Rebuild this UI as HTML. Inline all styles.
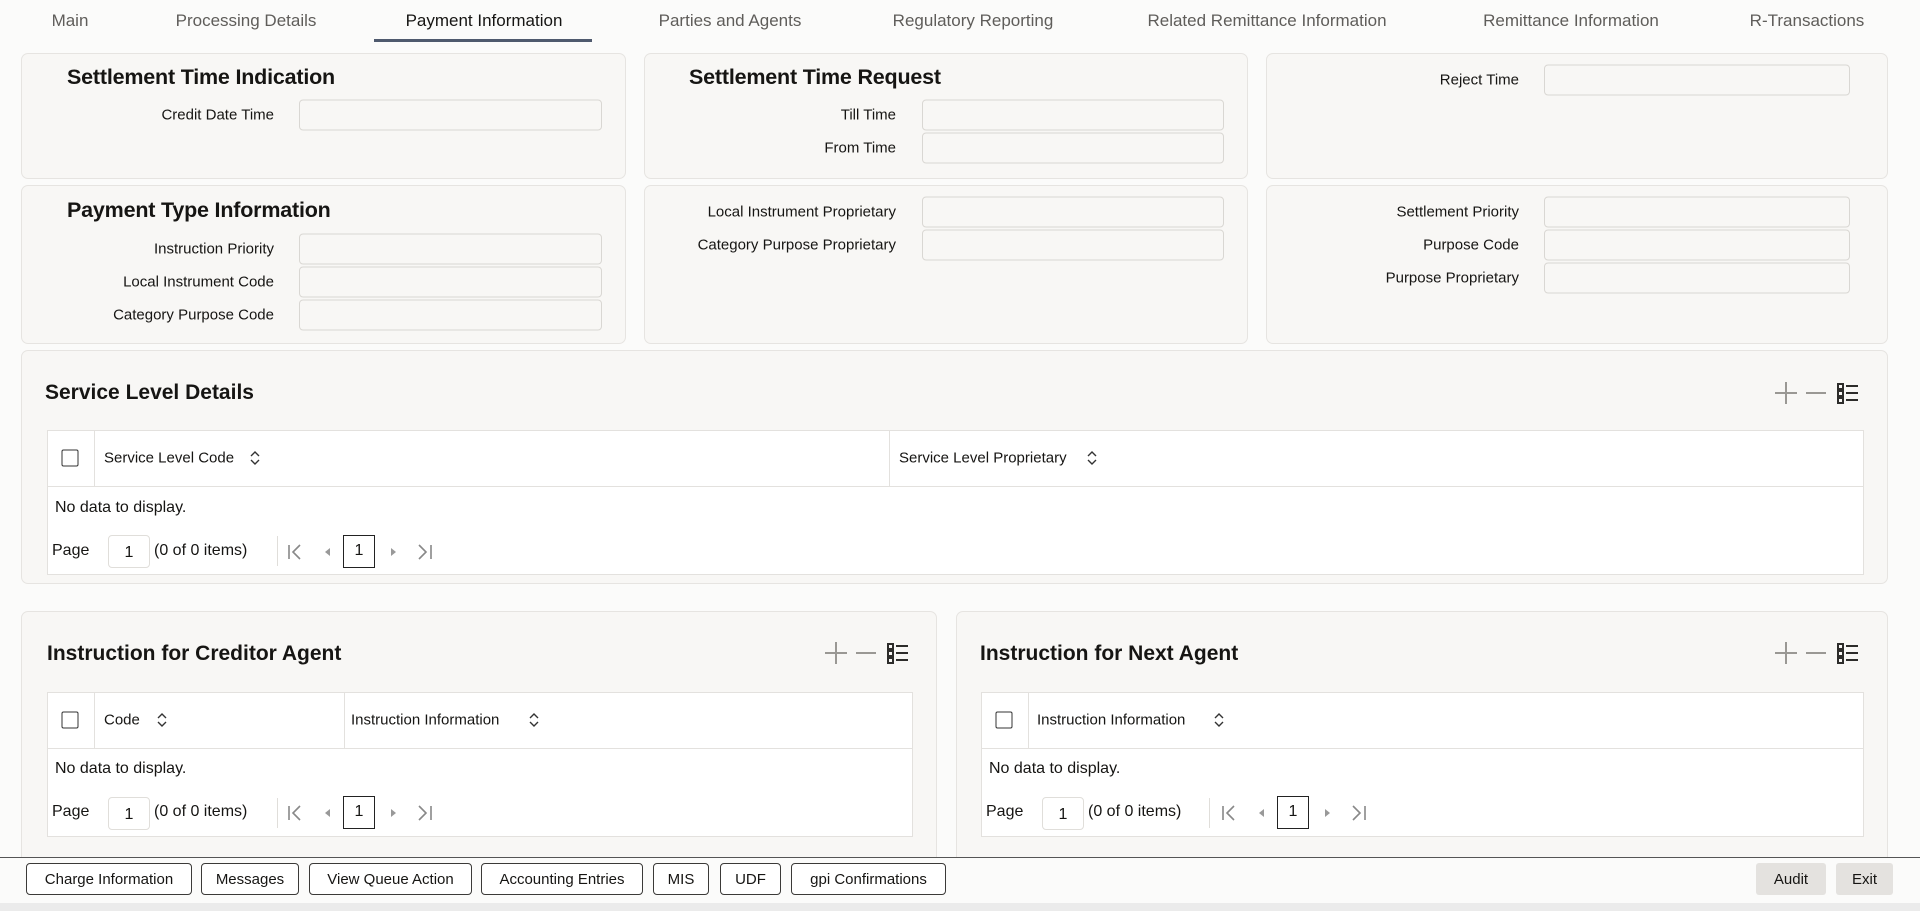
<!DOCTYPE html>
<html><head><meta charset="utf-8"><style>
*{box-sizing:border-box;margin:0;padding:0}
body{width:1920px;height:911px;background:#fbfbfa;font-family:"Liberation Sans",sans-serif;color:#161513;position:relative;overflow:hidden}
.a{position:absolute}
.tab{position:absolute;top:11px;font-size:17px;color:#5f5d5a;transform:translateX(-50%);white-space:nowrap}
.panel{position:absolute;background:#f8f7f5;border:1px solid #e6e4e1;border-radius:7px}
.h{position:absolute;font-size:21.5px;font-weight:bold;color:#161513;white-space:nowrap;letter-spacing:-0.2px}
.h2{position:absolute;font-size:21px;font-weight:bold;white-space:nowrap}
.lbl{position:absolute;font-size:15px;text-align:right;white-space:nowrap;transform:translate(-100%,-50%)}
.inp{position:absolute;height:31px;background:#f8f7f5;border:1px solid #d9d7d3;border-radius:4px;transform:translateY(-50%)}
.tbl{position:absolute;background:#fff;border:1px solid #e3e1de}
.th{position:absolute;font-size:15px;white-space:nowrap;transform:translateY(-50%)}
.cb{position:absolute;width:17px;height:17px;border:1.5px solid #333;border-radius:2px;transform:translate(-50%,-50%)}
.sort{position:absolute;transform:translate(-50%,-50%)}
.txt{position:absolute;font-size:16px;white-space:nowrap;transform:translateY(-50%)}
.btn{position:absolute;top:863px;height:32px;border:1px solid #3b3a38;border-radius:4px;background:#fff;font-size:15px;display:flex;align-items:center;justify-content:center;white-space:nowrap}
.gbtn{position:absolute;top:863px;height:32px;background:#e4e2df;border-radius:3px;font-size:15px;display:flex;align-items:center;justify-content:center}
</style></head><body>

<div class="tab" style="left:70px">Main</div>
<div class="tab" style="left:246px">Processing Details</div>
<div class="tab" style="left:484px;color:#161513">Payment Information</div>
<div class="tab" style="left:730px">Parties and Agents</div>
<div class="tab" style="left:973px">Regulatory Reporting</div>
<div class="tab" style="left:1267px">Related Remittance Information</div>
<div class="tab" style="left:1571px">Remittance Information</div>
<div class="tab" style="left:1807px">R-Transactions</div>
<div class="a" style="left:374px;top:39px;width:218px;height:3px;background:#4f5a6e"></div>

<!-- row 1 -->
<div class="panel" style="left:21px;top:53px;width:605px;height:126px"></div>
<div class="panel" style="left:644px;top:53px;width:604px;height:126px"></div>
<div class="panel" style="left:1266px;top:53px;width:622px;height:126px"></div>
<div class="h" style="left:67px;top:65px">Settlement Time Indication</div>
<div class="h" style="left:689px;top:65px">Settlement Time Request</div>
<div class="lbl" style="left:274px;top:115px">Credit Date Time</div>
<div class="inp" style="left:299px;top:115px;width:303px"></div>
<div class="lbl" style="left:896px;top:115px">Till Time</div>
<div class="inp" style="left:922px;top:115px;width:302px"></div>
<div class="lbl" style="left:896px;top:148px">From Time</div>
<div class="inp" style="left:922px;top:148px;width:302px"></div>
<div class="lbl" style="left:1519px;top:80px">Reject Time</div>
<div class="inp" style="left:1544px;top:80px;width:306px"></div>

<!-- row 2 -->
<div class="panel" style="left:21px;top:185px;width:605px;height:159px"></div>
<div class="panel" style="left:644px;top:185px;width:604px;height:159px"></div>
<div class="panel" style="left:1266px;top:185px;width:622px;height:159px"></div>
<div class="h" style="left:67px;top:198px">Payment Type Information</div>
<div class="lbl" style="left:274px;top:249px">Instruction Priority</div>
<div class="inp" style="left:299px;top:249px;width:303px"></div>
<div class="lbl" style="left:274px;top:282px">Local Instrument Code</div>
<div class="inp" style="left:299px;top:282px;width:303px"></div>
<div class="lbl" style="left:274px;top:315px">Category Purpose Code</div>
<div class="inp" style="left:299px;top:315px;width:303px"></div>
<div class="lbl" style="left:896px;top:212px">Local Instrument Proprietary</div>
<div class="inp" style="left:922px;top:212px;width:302px"></div>
<div class="lbl" style="left:896px;top:245px">Category Purpose Proprietary</div>
<div class="inp" style="left:922px;top:245px;width:302px"></div>
<div class="lbl" style="left:1519px;top:212px">Settlement Priority</div>
<div class="inp" style="left:1544px;top:212px;width:306px"></div>
<div class="lbl" style="left:1519px;top:245px">Purpose Code</div>
<div class="inp" style="left:1544px;top:245px;width:306px"></div>
<div class="lbl" style="left:1519px;top:278px">Purpose Proprietary</div>
<div class="inp" style="left:1544px;top:278px;width:306px"></div>

<!-- service level -->
<div class="panel" style="left:21px;top:350px;width:1867px;height:234px"></div>
<div class="h2" style="left:45px;top:381px">Service Level Details</div>
<svg class="a" style="left:1770px;top:380px" width="100" height="26">
 <path d="M5 13h22M16 2v22" stroke="#9a9894" stroke-width="2"/>
 <path d="M36 13h20" stroke="#9a9894" stroke-width="2"/>
 <g fill="none" stroke="#2d2c2a" stroke-width="2"><rect x="68" y="4" width="5" height="5"/><rect x="68" y="11" width="5" height="5"/><rect x="68" y="18" width="5" height="5"/></g>
 <path d="M76 6h12M76 13h12M76 20h12" stroke="#2d2c2a" stroke-width="2"/>
</svg>
<div class="tbl" style="left:47px;top:430px;width:1817px;height:145px"></div>
<div class="a" style="left:47px;top:486px;width:1817px;height:1px;background:#e3e1de"></div>
<div class="a" style="left:94px;top:431px;width:1px;height:55px;background:#e3e1de"></div>
<div class="a" style="left:889px;top:431px;width:1px;height:55px;background:#e3e1de"></div>
<div class="cb" style="left:70px;top:458px"></div>
<div class="th" style="left:104px;top:458px">Service Level Code</div>
<svg class="sort" style="left:255px;top:458px" width="10" height="14"><path d="M1 5l4-4 4 4M1 9l4 4 4-4" fill="none" stroke="#333" stroke-width="1.4"/></svg>
<div class="th" style="left:899px;top:458px">Service Level Proprietary</div>
<svg class="sort" style="left:1092px;top:458px" width="10" height="14"><path d="M1 5l4-4 4 4M1 9l4 4 4-4" fill="none" stroke="#333" stroke-width="1.4"/></svg>
<div class="txt" style="left:55px;top:508px">No data to display.</div>
<div class="txt" style="left:52px;top:551px">Page</div>
<div class="a" style="left:108px;top:535px;width:42px;height:33px;border:1px solid #e0deda;border-radius:4px;font-size:16px;text-align:center;line-height:33px">1</div>
<div class="txt" style="left:154px;top:551px">(0 of 0 items)</div>
<div class="a" style="left:277px;top:536px;width:1px;height:30px;background:#e0deda"></div>
<svg class="a" style="left:287px;top:541px" width="150" height="22"><path d="M2 4v14M13 4l-7 7 7 7" fill="none" stroke="#888" stroke-width="1.6"/><path d="M43 7l-5 4 5 4z" fill="#999"/><path d="M104 7l5 4-5 4z" fill="#999"/><path d="M132 4l7 7-7 7M144 4v14" fill="none" stroke="#888" stroke-width="1.6"/></svg>
<div class="a" style="left:343px;top:535px;width:32px;height:33px;border:1.5px solid #222;font-size:16px;text-align:center;line-height:30px">1</div>

<!-- creditor agent -->
<div class="panel" style="left:21px;top:611px;width:916px;height:260px"></div>
<div class="h2" style="left:47px;top:642px">Instruction for Creditor Agent</div>
<svg class="a" style="left:820px;top:640px" width="100" height="26">
 <path d="M5 13h22M16 2v22" stroke="#9a9894" stroke-width="2"/>
 <path d="M36 13h20" stroke="#9a9894" stroke-width="2"/>
 <g fill="none" stroke="#2d2c2a" stroke-width="2"><rect x="68" y="4" width="5" height="5"/><rect x="68" y="11" width="5" height="5"/><rect x="68" y="18" width="5" height="5"/></g>
 <path d="M76 6h12M76 13h12M76 20h12" stroke="#2d2c2a" stroke-width="2"/>
</svg>
<div class="tbl" style="left:47px;top:692px;width:866px;height:145px"></div>
<div class="a" style="left:47px;top:748px;width:866px;height:1px;background:#e3e1de"></div>
<div class="a" style="left:94px;top:693px;width:1px;height:55px;background:#e3e1de"></div>
<div class="a" style="left:344px;top:693px;width:1px;height:55px;background:#e3e1de"></div>
<div class="cb" style="left:70px;top:720px"></div>
<div class="th" style="left:104px;top:720px">Code</div>
<svg class="sort" style="left:162px;top:720px" width="10" height="14"><path d="M1 5l4-4 4 4M1 9l4 4 4-4" fill="none" stroke="#333" stroke-width="1.4"/></svg>
<div class="th" style="left:351px;top:720px">Instruction Information</div>
<svg class="sort" style="left:534px;top:720px" width="10" height="14"><path d="M1 5l4-4 4 4M1 9l4 4 4-4" fill="none" stroke="#333" stroke-width="1.4"/></svg>
<div class="txt" style="left:55px;top:769px">No data to display.</div>
<div class="txt" style="left:52px;top:812px">Page</div>
<div class="a" style="left:108px;top:797px;width:42px;height:33px;border:1px solid #e0deda;border-radius:4px;font-size:16px;text-align:center;line-height:33px">1</div>
<div class="txt" style="left:154px;top:812px">(0 of 0 items)</div>
<div class="a" style="left:277px;top:798px;width:1px;height:30px;background:#e0deda"></div>
<svg class="a" style="left:287px;top:802px" width="150" height="22"><path d="M2 4v14M13 4l-7 7 7 7" fill="none" stroke="#888" stroke-width="1.6"/><path d="M43 7l-5 4 5 4z" fill="#999"/><path d="M104 7l5 4-5 4z" fill="#999"/><path d="M132 4l7 7-7 7M144 4v14" fill="none" stroke="#888" stroke-width="1.6"/></svg>
<div class="a" style="left:343px;top:796px;width:32px;height:33px;border:1.5px solid #222;font-size:16px;text-align:center;line-height:30px">1</div>

<!-- next agent -->
<div class="panel" style="left:956px;top:611px;width:932px;height:260px"></div>
<div class="h2" style="left:980px;top:642px">Instruction for Next Agent</div>
<svg class="a" style="left:1770px;top:640px" width="100" height="26">
 <path d="M5 13h22M16 2v22" stroke="#9a9894" stroke-width="2"/>
 <path d="M36 13h20" stroke="#9a9894" stroke-width="2"/>
 <g fill="none" stroke="#2d2c2a" stroke-width="2"><rect x="68" y="4" width="5" height="5"/><rect x="68" y="11" width="5" height="5"/><rect x="68" y="18" width="5" height="5"/></g>
 <path d="M76 6h12M76 13h12M76 20h12" stroke="#2d2c2a" stroke-width="2"/>
</svg>
<div class="tbl" style="left:981px;top:692px;width:883px;height:145px"></div>
<div class="a" style="left:981px;top:748px;width:883px;height:1px;background:#e3e1de"></div>
<div class="a" style="left:1028px;top:693px;width:1px;height:55px;background:#e3e1de"></div>
<div class="cb" style="left:1004px;top:720px"></div>
<div class="th" style="left:1037px;top:720px">Instruction Information</div>
<svg class="sort" style="left:1219px;top:720px" width="10" height="14"><path d="M1 5l4-4 4 4M1 9l4 4 4-4" fill="none" stroke="#333" stroke-width="1.4"/></svg>
<div class="txt" style="left:989px;top:769px">No data to display.</div>
<div class="txt" style="left:986px;top:812px">Page</div>
<div class="a" style="left:1042px;top:797px;width:42px;height:33px;border:1px solid #e0deda;border-radius:4px;font-size:16px;text-align:center;line-height:33px">1</div>
<div class="txt" style="left:1088px;top:812px">(0 of 0 items)</div>
<div class="a" style="left:1209px;top:798px;width:1px;height:30px;background:#e0deda"></div>
<svg class="a" style="left:1221px;top:802px" width="150" height="22"><path d="M2 4v14M13 4l-7 7 7 7" fill="none" stroke="#888" stroke-width="1.6"/><path d="M43 7l-5 4 5 4z" fill="#999"/><path d="M104 7l5 4-5 4z" fill="#999"/><path d="M132 4l7 7-7 7M144 4v14" fill="none" stroke="#888" stroke-width="1.6"/></svg>
<div class="a" style="left:1277px;top:796px;width:32px;height:33px;border:1.5px solid #222;font-size:16px;text-align:center;line-height:30px">1</div>

<!-- footer -->
<div class="a" style="left:0;top:857px;width:1920px;height:54px;background:#fbfbfa"></div>
<div class="a" style="left:0;top:857px;width:1920px;height:1px;background:#555"></div>
<div class="btn" style="left:26px;width:166px">Charge Information</div>
<div class="btn" style="left:201px;width:98px">Messages</div>
<div class="btn" style="left:309px;width:163px">View Queue Action</div>
<div class="btn" style="left:481px;width:162px">Accounting Entries</div>
<div class="btn" style="left:653px;width:56px">MIS</div>
<div class="btn" style="left:720px;width:61px">UDF</div>
<div class="btn" style="left:791px;width:155px">gpi Confirmations</div>
<div class="gbtn" style="left:1756px;width:70px">Audit</div>
<div class="gbtn" style="left:1836px;width:57px">Exit</div>
<div class="a" style="left:0;top:903px;width:1920px;height:8px;background:#ebebeb"></div>
</body></html>
